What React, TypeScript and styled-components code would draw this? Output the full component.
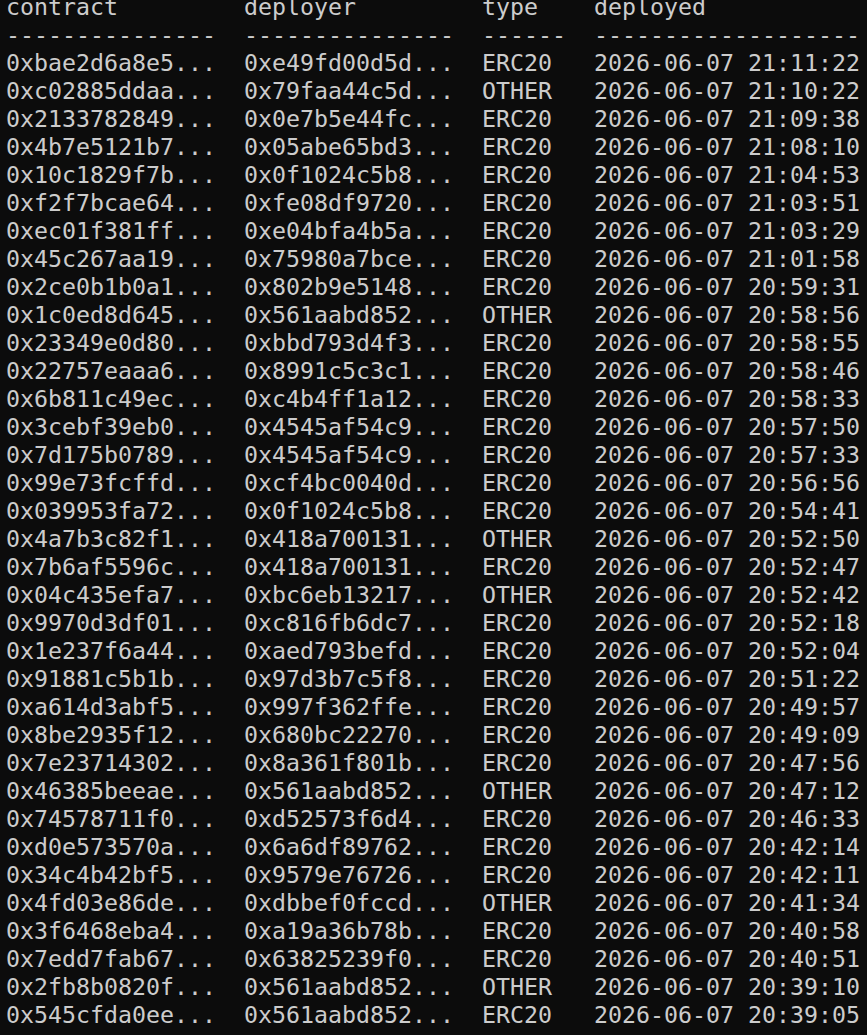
import { createGlobalStyle } from "styled-components";
import styled from "styled-components";

const GlobalStyle = createGlobalStyle`
  html, body {
    margin: 0;
    padding: 0;
    background: #0c0c0c;
    overflow: hidden;
  }
`;

// contract | deployer | type | deployed (time only, date is the same for all)
const RAW = `
0xbae2d6a8e5 0xe49fd00d5d ERC20 21:11:22
0xc02885ddaa 0x79faa44c5d OTHER 21:10:22
0x2133782849 0x0e7b5e44fc ERC20 21:09:38
0x4b7e5121b7 0x05abe65bd3 ERC20 21:08:10
0x10c1829f7b 0x0f1024c5b8 ERC20 21:04:53
0xf2f7bcae64 0xfe08df9720 ERC20 21:03:51
0xec01f381ff 0xe04bfa4b5a ERC20 21:03:29
0x45c267aa19 0x75980a7bce ERC20 21:01:58
0x2ce0b1b0a1 0x802b9e5148 ERC20 20:59:31
0x1c0ed8d645 0x561aabd852 OTHER 20:58:56
0x23349e0d80 0xbbd793d4f3 ERC20 20:58:55
0x22757eaaa6 0x8991c5c3c1 ERC20 20:58:46
0x6b811c49ec 0xc4b4ff1a12 ERC20 20:58:33
0x3cebf39eb0 0x4545af54c9 ERC20 20:57:50
0x7d175b0789 0x4545af54c9 ERC20 20:57:33
0x99e73fcffd 0xcf4bc0040d ERC20 20:56:56
0x039953fa72 0x0f1024c5b8 ERC20 20:54:41
0x4a7b3c82f1 0x418a700131 OTHER 20:52:50
0x7b6af5596c 0x418a700131 ERC20 20:52:47
0x04c435efa7 0xbc6eb13217 OTHER 20:52:42
0x9970d3df01 0xc816fb6dc7 ERC20 20:52:18
0x1e237f6a44 0xaed793befd ERC20 20:52:04
0x91881c5b1b 0x97d3b7c5f8 ERC20 20:51:22
0xa614d3abf5 0x997f362ffe ERC20 20:49:57
0x8be2935f12 0x680bc22270 ERC20 20:49:09
0x7e23714302 0x8a361f801b ERC20 20:47:56
0x46385beeae 0x561aabd852 OTHER 20:47:12
0x74578711f0 0xd52573f6d4 ERC20 20:46:33
0xd0e573570a 0x6a6df89762 ERC20 20:42:14
0x34c4b42bf5 0x9579e76726 ERC20 20:42:11
0x4fd03e86de 0xdbbef0fccd OTHER 20:41:34
0x3f6468eba4 0xa19a36b78b ERC20 20:40:58
0x7edd7fab67 0x63825239f0 ERC20 20:40:51
0x2fb8b0820f 0x561aabd852 OTHER 20:39:10
0x545cfda0ee 0x561aabd852 ERC20 20:39:05
`;

const DATE = "2026-06-07";

const rows = RAW.trim()
  .split("\n")
  .map((line) => {
    const [contract, deployer, type, time] = line.split(" ");
    return { contract, deployer, type, deployed: `${DATE} ${time}` };
  });

const Terminal = styled.div`
  background: #0c0c0c;
  color: #cccccc;
  font-family: "DejaVu Sans Mono", "Liberation Mono", monospace;
  font-size: 23.25px;
  line-height: 28px;
  padding: 0 0 0 6px;
  margin-top: -7px;
  height: 1050px;
  white-space: pre;
`;

const Row = styled.div`
  display: grid;
  grid-template-columns: 210px 210px 84px 266px;
  column-gap: 28px;
  height: 28px;
`;

const Cell = styled.span`
  overflow: hidden;
`;

const Rule = styled.span`
  letter-spacing: 0;
`;

const dashes = (n: number) => "-".repeat(n);

export default function App() {
  return (
    <>
      <GlobalStyle />
      <Terminal>
        <Row>
          <Cell>contract</Cell>
          <Cell>deployer</Cell>
          <Cell>type</Cell>
          <Cell>deployed</Cell>
        </Row>
        <Row>
          <Rule>{dashes(15)}</Rule>
          <Rule>{dashes(15)}</Rule>
          <Rule>{dashes(6)}</Rule>
          <Rule>{dashes(19)}</Rule>
        </Row>
        {rows.map((r) => (
          <Row key={r.contract}>
            <Cell>{r.contract}...</Cell>
            <Cell>{r.deployer}...</Cell>
            <Cell>{r.type}</Cell>
            <Cell>{r.deployed}</Cell>
          </Row>
        ))}
      </Terminal>
    </>
  );
}
